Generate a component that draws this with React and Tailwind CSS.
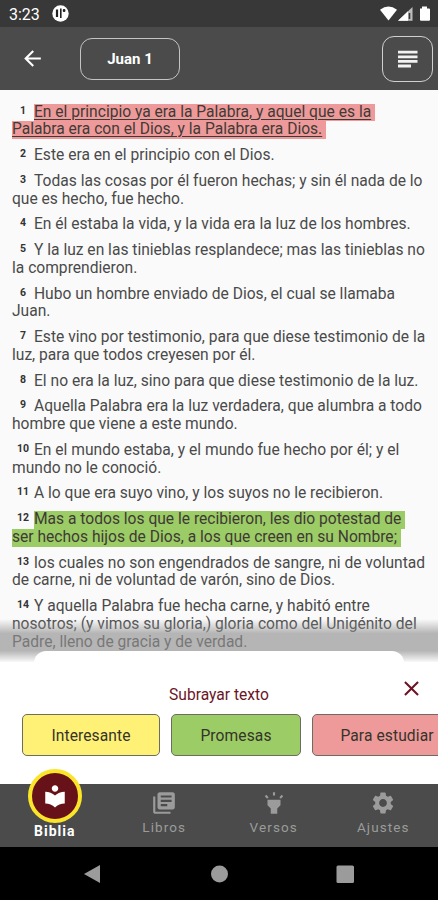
import React from "react";
import {
  MdArrowBack,
  MdClose,
  MdHighlight,
  MdLibraryBooks,
  MdLocalLibrary,
  MdSettings,
} from "react-icons/md";

const verses = [
  {
    lines: [
      "En el principio ya era la Palabra, y aquel que es la",
      "Palabra era con el Dios, y la Palabra era Dios.",
    ],
    mark: "bg-[#ef9a9a] underline underline-offset-2 decoration-1",
  },
  { lines: ["Este era en el principio con el Dios."] },
  {
    lines: [
      "Todas las cosas por él fueron hechas; y sin él nada de lo",
      "que es hecho, fue hecho.",
    ],
  },
  { lines: ["En él estaba la vida, y la vida era la luz de los hombres."] },
  {
    lines: [
      "Y la luz en las tinieblas resplandece; mas las tinieblas no",
      "la comprendieron.",
    ],
  },
  { lines: ["Hubo un hombre enviado de Dios, el cual se llamaba", "Juan."] },
  {
    lines: [
      "Este vino por testimonio, para que diese testimonio de la",
      "luz, para que todos creyesen por él.",
    ],
  },
  { lines: ["El no era la luz, sino para que diese testimonio de la luz."] },
  {
    lines: [
      "Aquella Palabra era la luz verdadera, que alumbra a todo",
      "hombre que viene a este mundo.",
    ],
  },
  {
    lines: [
      "En el mundo estaba, y el mundo fue hecho por él; y el",
      "mundo no le conoció.",
    ],
  },
  { lines: ["A lo que era suyo vino, y los suyos no le recibieron."] },
  {
    lines: [
      "Mas a todos los que le recibieron, les dio potestad de",
      "ser hechos hijos de Dios, a los que creen en su Nombre;",
    ],
    mark: "bg-[#9ccc65]",
  },
  {
    lines: [
      "los cuales no son engendrados de sangre, ni de voluntad",
      "de carne, ni de voluntad de varón, sino de Dios.",
    ],
  },
  {
    lines: [
      "Y aquella Palabra fue hecha carne, y habitó entre",
      "nosotros; (y vimos su gloria,) gloria como del Unigénito del",
      "Padre, lleno de gracia y de verdad.",
    ],
  },
];

const labels = [
  { text: "Interesante", className: "w-[138px] bg-[#fff176]" },
  { text: "Promesas", className: "w-[130px] bg-[#9ccc65]" },
  { text: "Para estudiar", className: "w-[150px] bg-[#ef9a9a]" },
];

const tabs = [
  { text: "Libros", Icon: MdLibraryBooks },
  { text: "Versos", Icon: MdHighlight },
  { text: "Ajustes", Icon: MdSettings },
];

const StatusBar = () => (
  <div className="flex h-[27px] items-center bg-[#383838] pr-2 pl-[9px] text-white">
    <span className="pt-[2px] text-[16px] leading-none">3:23</span>
    <svg className="ml-[12px]" width="17" height="17" viewBox="0 0 17 17">
      <circle cx="8.5" cy="8.5" r="8.2" fill="#fff" />
      <path d="M5 4.5v7.500" stroke="#222" strokeWidth="2.2" />
      <path d="M8.8 3.5v9.500" stroke="#222" strokeWidth="1.6" />
      <rect x="10.8" y="4" width="2.6" height="3" rx="1" fill="#222" />
    </svg>
    <svg className="ml-auto" width="50" height="16" viewBox="0 0 50 16">
      <path d="M0 3.8Q8.5-2.6 17 3.8L8.5 14.6z" fill="#fff" />
      <path d="M32.5 1v13.8H18z" fill="#bdbdbd" />
      <path d="M28 5.3v9.5H18z" fill="#fff" />
      <path d="M29.5 7v6" stroke="#383838" strokeWidth="1.6" />
      <path
        d="M40 2.6h2V.6h5v2h2a1 1 0 0 1 1 1v10.2a1 1 0 0 1-1 1h-8a1 1 0 0 1-1-1z"
        fill="#fff"
      />
    </svg>
  </div>
);

const Header = () => (
  <div className="flex h-[63px] items-center bg-[#4a4b4a] pr-[5px] pl-[20px] text-white">
    <MdArrowBack size={25} />
    <button className="ml-[35px] h-[42px] w-[100px] rounded-[12px] border-[1.5px] border-[#c4c4c4] pt-px text-[15px] font-bold">
      Juan 1
    </button>
    <button className="ml-auto flex h-[46px] w-[51px] items-center justify-center rounded-[12px] border-[1.5px] border-[#d0d0d0]">
      <svg width="20" height="18" viewBox="0 0 20 18">
        <path
          d="M0 2.200h19.500M0 6.800h19.500M0 11.400h19.500M0 16h13"
          stroke="#f2f2f2"
          strokeWidth="2.8"
        />
      </svg>
    </button>
  </div>
);

const Verse = ({ number, lines, mark }) => (
  <p className="text-[15.6px] leading-[17.75px] whitespace-nowrap text-[#4a4a4a]">
    {lines.map((line, i) => (
      <span key={line} className="flex">
        {i === 0 && (
          <span
            className={`relative -top-[2px] w-[22px] text-right text-[10.5px] font-bold text-[#333] ${
              number > 9 ? "pr-[5px]" : "pr-[8px]"
            }`}
          >
            {number}
          </span>
        )}
        <span className={mark ? `${mark} pr-[4px] text-[#403a36]` : ""}>
          {line}
        </span>
      </span>
    ))}
  </p>
);

const HighlightSheet = () => (
  <div className="absolute inset-x-0 bottom-0 h-[165px]">
    {/* Shadow that the sheet throws over the verses */}
    <div className="h-[32px] bg-linear-to-b from-transparent via-[#909090]/65 via-45% to-[#909090]/65" />
    <div className="h-[12px] bg-linear-to-b from-[#b7b7b7] to-white" />
    <div className="absolute inset-x-0 top-[43px] bottom-0 bg-white" />
    <div className="absolute top-[32px] left-[34px] h-[20px] w-[370px] rounded-t-[12px] bg-white" />

    <div className="absolute inset-x-0 top-[55px] bottom-0 overflow-hidden">
      <div className="relative flex h-[40px] items-center justify-center">
        <span className="pt-[4px] text-[15.6px] text-[#6b1524]">
          Subrayar texto
        </span>
        <MdClose
          size={25}
          className="absolute top-[2px] right-[14px] text-[#6b1524]"
        />
      </div>
      <div className="ml-[22px] flex gap-[11px]">
        {labels.map(({ text, className }) => (
          <button
            key={text}
            className={`h-[42px] shrink-0 rounded-[5px] border border-[#6c6c60] pt-[3px] text-[15.6px] tracking-[0.1px] text-[#35342a] ${className}`}
          >
            {text}
          </button>
        ))}
      </div>
    </div>
  </div>
);

const TabBar = () => (
  <div className="relative grid h-[63px] grid-cols-4 bg-[#4a4b4a] text-[#9b9b9b]">
    <div className="-mt-[15px] flex flex-col items-center text-white">
      <div className="flex h-[54px] w-[54px] items-center justify-center rounded-full border-[4px] border-[#fbe52a] bg-[#671219]">
        <MdLocalLibrary size={26} />
      </div>
      <span className="text-[14px] leading-[16px] font-bold tracking-[1px]">
        Biblia
      </span>
    </div>
    {tabs.map(({ text, Icon }) => (
      <div key={text} className="flex flex-col items-center pt-[6px]">
        <Icon size={26} />
        <span className="mt-[3px] text-[13.5px] leading-[16px] tracking-[1.1px]">
          {text}
        </span>
      </div>
    ))}
  </div>
);

const SystemBar = () => (
  <div className="flex h-[53px] items-center bg-black pl-[83px]">
    <svg width="272" height="20" viewBox="0 0 272 20" fill="#9b9b9b">
      <path d="M17 1v18L1 10z" />
      <circle cx="136.500" cy="10" r="8.500" />
      <rect x="253.500" y="1.500" width="17.500" height="17.500" rx="1.500" />
    </svg>
  </div>
);

const App = () => {
  return (
    <div className="flex h-[900px] w-[438px] flex-col overflow-hidden bg-[#fafafa] font-['Roboto',sans-serif]">
      <StatusBar />
      <Header />
      <div className="relative h-[694px] bg-[#fafafa]">
        <div className="flex flex-col gap-[8px] pt-[13.5px] pl-[12px]">
          {verses.map((verse, i) => (
            <Verse key={i} number={i + 1} {...verse} />
          ))}
        </div>
        <HighlightSheet />
      </div>
      <TabBar />
      <SystemBar />
    </div>
  );
};

export default App;
